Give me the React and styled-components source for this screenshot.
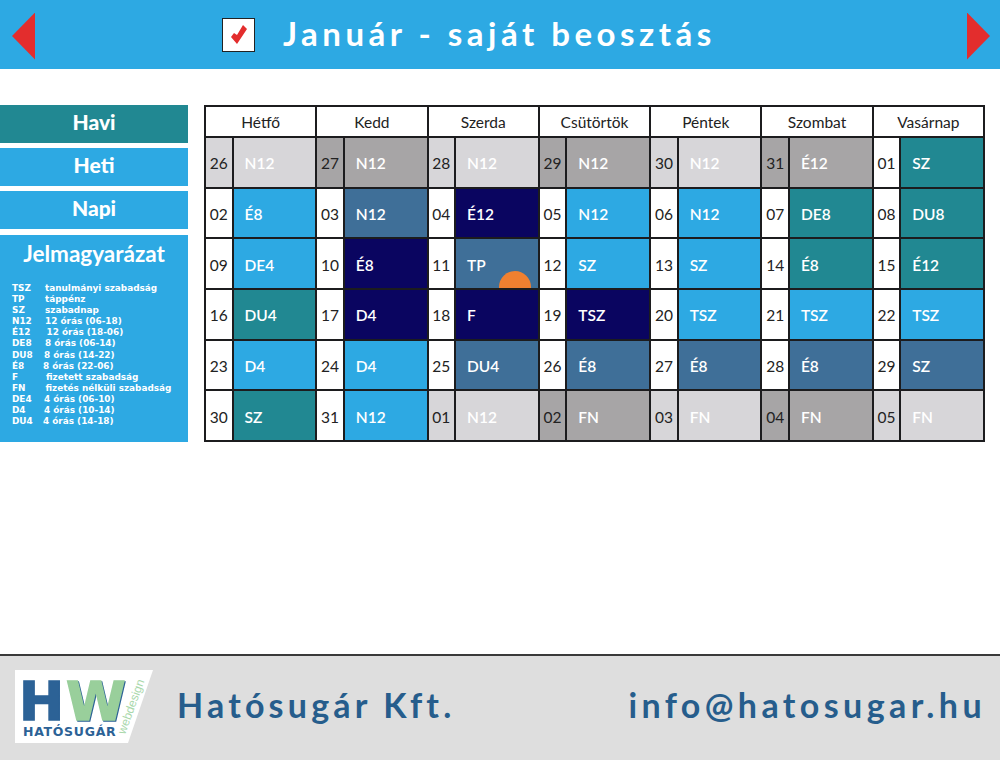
import React from 'react';
import styled, { createGlobalStyle } from 'styled-components';

const GlobalStyle = createGlobalStyle`
  html, body {
    margin: 0;
    padding: 0;
    background: #fff;
    font-family: "Lato", "Liberation Sans", sans-serif;
  }
  * { box-sizing: border-box; }
`;

const colors = {
  light: '#d7d6d9',
  dark: '#a7a5a6',
  steel: '#3f6f98',
  navy: '#0a0560',
  teal: '#218892',
  blue: '#2da9e3',
};

const Page = styled.div`
  width: 1000px;
  height: 760px;
  display: flex;
  flex-direction: column;
  overflow: hidden;
`;

const Header = styled.header`
  height: 69px;
  flex: none;
  background: ${colors.blue};
  display: flex;
  align-items: center;
  padding: 0 10px 0 12px;
`;

const Arrow = styled.div`
  width: 23px;
  height: 47px;
  flex: none;
  margin-top: 3px;
  background: #e32d2d;
  clip-path: ${props => (props.$right
    ? 'polygon(0 0, 100% 50%, 0 100%)'
    : 'polygon(100% 0, 0 50%, 100% 100%)')};
`;

const TitleGroup = styled.div`
  display: flex;
  align-items: center;
  gap: 28px;
  margin-left: 187px;
  margin-right: auto;
`;

const CheckBox = styled.div`
  width: 33px;
  height: 34px;
  background: #fff;
  border: 1px solid #222;
  display: flex;
`;

const Title = styled.h1`
  margin: 0;
  height: 34px;
  line-height: 30px;
  color: #fff;
  font-size: 33px;
  font-weight: 700;
  letter-spacing: 4.5px;
  white-space: nowrap;
`;

const Main = styled.main`
  flex: 1;
  display: flex;
  align-items: flex-start;
  gap: 16px;
  padding-top: 36px;
`;

const Sidebar = styled.aside`
  width: 188px;
  flex: none;
  display: flex;
  flex-direction: column;
  gap: 5px;
  color: #fff;
`;

const NavItem = styled.div`
  height: 38px;
  padding-bottom: 6px;
  background: ${props => (props.$active ? colors.teal : colors.blue)};
  display: flex;
  align-items: center;
  justify-content: center;
  font-size: 21px;
  font-weight: 900;
`;

const Legend = styled.section`
  height: 207px;
  margin-top: 1px;
  background: ${colors.blue};
  padding-top: 5px;
`;

const LegendTitle = styled.h2`
  margin: 0 0 16px;
  text-align: center;
  font-size: 22.5px;
  line-height: 27px;
  font-weight: 700;
`;

const LegendRow = styled.div`
  display: flex;
  height: 11.1px;
  line-height: 11.1px;
  padding-left: 12px;
  font-family: "DejaVu Sans", sans-serif;
  font-size: 8.9px;
  font-weight: 700;
  white-space: nowrap;
`;

const LegendCode = styled.span`
  width: ${props => props.$width}px;
  flex: none;
`;

const Calendar = styled.div`
  width: 781px;
  height: 337px;
  display: grid;
  grid-template-columns: repeat(7, 1fr);
  grid-template-rows: 29px repeat(6, 1fr);
  gap: 2px;
  padding: 2px;
  background: #1c1c1e;
`;

const DayName = styled.div`
  background: #fff;
  color: #222;
  display: flex;
  align-items: center;
  justify-content: center;
  font-size: 15.5px;
`;

const Cell = styled.div`
  display: grid;
  grid-template-columns: 25.5px 1fr;
  gap: 2px;
  min-width: 0;
`;

const DayNumber = styled.div`
  background: ${props => (props.$tone === 'light' || props.$tone === 'dark' ? colors[props.$tone] : '#fff')};
  color: #222;
  display: flex;
  align-items: center;
  justify-content: center;
  padding-top: 2px;
  font-size: 15.5px;
`;

const Shift = styled.div`
  position: relative;
  background: ${props => colors[props.$tone]};
  color: #fff;
  display: flex;
  align-items: center;
  padding: 2px 0 0 11px;
  font-size: 15.5px;
  font-weight: 600;
  overflow: hidden;
`;

const SunBadge = styled.span`
  position: absolute;
  right: 7px;
  bottom: 0;
  width: 32px;
  height: 17px;
  background: #f08030;
  border-radius: 16px 16px 0 0;
`;

const Footer = styled.footer`
  height: 106px;
  flex: none;
  background: #dedede;
  border-top: 2px solid #3a3a3a;
  display: flex;
  align-items: flex-start;
  padding: 14px 14px 0 15px;
`;

const FooterText = styled.div`
  color: #265d8c;
  font-size: 34px;
  font-weight: 700;
  letter-spacing: ${props => props.$spacing};
  line-height: 44px;
  margin-top: 13px;
  white-space: nowrap;
  margin-left: ${props => props.$left};
`;

const LogoMark = styled.text`
  font-family: "DejaVu Sans", sans-serif;
  font-weight: 700;
  font-size: 54px;
  fill: ${props => props.$color};
  stroke: ${props => props.$color};
  stroke-width: 1.5px;
  filter: ${props => (props.$shadow ? 'drop-shadow(1.5px 1px 0 #2c6296)' : 'none')};
`;

const LogoName = styled.text`
  font-family: "DejaVu Sans", sans-serif;
  font-weight: 700;
  font-size: 12.5px;
  letter-spacing: 0.7px;
  fill: #2c6296;
`;

const LogoTag = styled.text`
  font-family: "Liberation Sans", sans-serif;
  font-size: 12px;
  fill: #a9d8ab;
`;

const legend = [
  ['TSZ', 33, 'tanulmányi szabadság'],
  ['TP', 33, 'táppénz'],
  ['SZ', 33, 'szabadnap'],
  ['N12', 33, '12 órás (06-18)'],
  ['É12', 34.5, '12 órás (18-06)'],
  ['DE8', 33, '8 órás (06-14)'],
  ['DU8', 32, '8 órás (14-22)'],
  ['É8', 31, '8 órás (22-06)'],
  ['F', 34, 'fizetett szabadság'],
  ['FN', 33.5, 'fizetés nélküli szabadság'],
  ['DE4', 32, '4 órás (06-10)'],
  ['D4', 32, '4 órás (10-14)'],
  ['DU4', 31, '4 órás (14-18)'],
];

const days = ['Hétfő', 'Kedd', 'Szerda', 'Csütörtök', 'Péntek', 'Szombat', 'Vasárnap'];

const weeks = [
  [['26', 'N12', 'light'], ['27', 'N12', 'dark'], ['28', 'N12', 'light'], ['29', 'N12', 'dark'], ['30', 'N12', 'light'], ['31', 'É12', 'dark'], ['01', 'SZ', 'teal']],
  [['02', 'É8', 'blue'], ['03', 'N12', 'steel'], ['04', 'É12', 'navy'], ['05', 'N12', 'blue'], ['06', 'N12', 'blue'], ['07', 'DE8', 'teal'], ['08', 'DU8', 'teal']],
  [['09', 'DE4', 'blue'], ['10', 'É8', 'navy'], ['11', 'TP', 'steel', true], ['12', 'SZ', 'blue'], ['13', 'SZ', 'blue'], ['14', 'É8', 'teal'], ['15', 'É12', 'teal']],
  [['16', 'DU4', 'teal'], ['17', 'D4', 'navy'], ['18', 'F', 'navy'], ['19', 'TSZ', 'navy'], ['20', 'TSZ', 'blue'], ['21', 'TSZ', 'blue'], ['22', 'TSZ', 'blue']],
  [['23', 'D4', 'blue'], ['24', 'D4', 'blue'], ['25', 'DU4', 'steel'], ['26', 'É8', 'steel'], ['27', 'É8', 'steel'], ['28', 'É8', 'steel'], ['29', 'SZ', 'steel']],
  [['30', 'SZ', 'teal'], ['31', 'N12', 'blue'], ['01', 'N12', 'light'], ['02', 'FN', 'dark'], ['03', 'FN', 'light'], ['04', 'FN', 'dark'], ['05', 'FN', 'light']],
];

const Tick = () => (
  <svg width="31" height="32" viewBox="0 0 31 32">
    <polygon points="8,18 14,25 24,10 20,6 14,16 11,14" fill="#e32d2d" />
  </svg>
);

const Logo = () => (
  <svg width="138" height="73" viewBox="0 0 138 73">
    <polygon points="0,0 138,0 113,73 0,73" fill="#fff" />
    <LogoMark x="4" y="50" $color="#2c6296">H</LogoMark>
    <LogoMark x="51" y="50" $color="#99cf9b" $shadow>W</LogoMark>
    <LogoName x="8" y="66">HATÓSUGÁR</LogoName>
    <LogoTag transform="translate(110 65) rotate(-70)">webdesign</LogoTag>
  </svg>
);

const App = () => (
  <Page>
    <GlobalStyle />
    <Header>
      <Arrow />
      <TitleGroup>
        <CheckBox><Tick /></CheckBox>
        <Title>Január - saját beosztás</Title>
      </TitleGroup>
      <Arrow $right />
    </Header>

    <Main>
      <Sidebar>
        <NavItem $active>Havi</NavItem>
        <NavItem>Heti</NavItem>
        <NavItem>Napi</NavItem>
        <Legend>
          <LegendTitle>Jelmagyarázat</LegendTitle>
          {legend.map(([code, width, text]) => (
            <LegendRow key={code}>
              <LegendCode $width={width}>{code}</LegendCode>
              <span>{text}</span>
            </LegendRow>
          ))}
        </Legend>
      </Sidebar>

      <Calendar>
        {days.map(day => <DayName key={day}>{day}</DayName>)}
        {weeks.flat().map(([num, code, tone, badge], i) => (
          <Cell key={i}>
            <DayNumber $tone={tone}>{num}</DayNumber>
            <Shift $tone={tone}>
              {code}
              {badge && <SunBadge />}
            </Shift>
          </Cell>
        ))}
      </Calendar>
    </Main>

    <Footer>
      <Logo />
      <FooterText $left="24px" $spacing="4.2px">Hatósugár Kft.</FooterText>
      <FooterText $left="auto" $spacing="4.4px">info@hatosugar.hu</FooterText>
    </Footer>
  </Page>
);

export default App;
